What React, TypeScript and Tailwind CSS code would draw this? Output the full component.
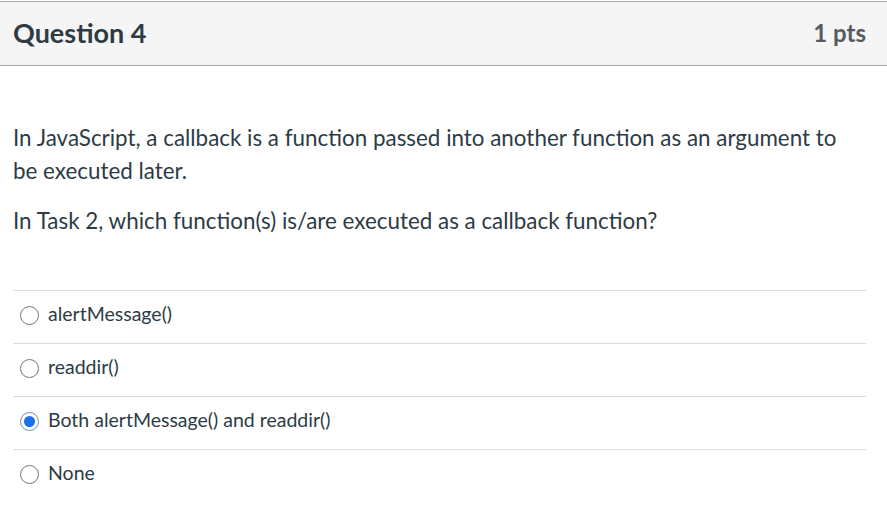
const answers = [
  { id: 'a1', label: 'alertMessage()', checked: false },
  { id: 'a2', label: 'readdir()', checked: false },
  { id: 'a3', label: 'Both alertMessage() and readdir()', checked: true },
  { id: 'a4', label: 'None', checked: false },
];

function Radio({ checked }: { checked: boolean }) {
  if (checked) {
    return (
      <span className="flex h-[19px] w-[19px] shrink-0 items-center justify-center rounded-full border border-[#6d8fb8] bg-white">
        <span className="h-[11px] w-[11px] rounded-full bg-[#1a6ff0]" />
      </span>
    );
  }
  return <span className="h-[19px] w-[19px] shrink-0 rounded-full border border-[#767676] bg-white" />;
}

export default function App() {
  return (
    <div className="min-h-[514px] bg-white pt-px font-['Lato','Noto_Sans',sans-serif] text-[#2d3b45]">
      {/* Header */}
      <div className="flex h-[65px] items-center justify-between border-y border-[#a9a9a9] bg-[#f5f5f5] pb-[2px] pl-[13px] pr-[21px]">
        <h2 className="text-[27px] font-bold leading-none">Question 4</h2>
        <span className="text-[24px] font-bold leading-none text-[#555b60]">1 pts</span>
      </div>

      {/* Question text */}
      <div className="pl-[13px] pr-[21px] pt-[55px] text-[22.4px] leading-[33px]">
        <p>
          In JavaScript, a callback is a function passed into another function as an argument to be executed later.
        </p>
        <p className="mt-[17px]">In Task 2, which function(s) is/are executed as a callback function?</p>
      </div>

      {/* Answers */}
      <div className="ml-[13px] mr-[21px] mt-[53px]">
        {answers.map((a) => (
          <label
            key={a.id}
            className="flex h-[53px] items-center gap-[9px] border-t border-[#dcdcdc] pb-[4px] pl-[7px] text-[19.5px]"
          >
            <Radio checked={a.checked} />
            <span className="-mt-[3px] leading-none">{a.label}</span>
          </label>
        ))}
      </div>
    </div>
  );
}
